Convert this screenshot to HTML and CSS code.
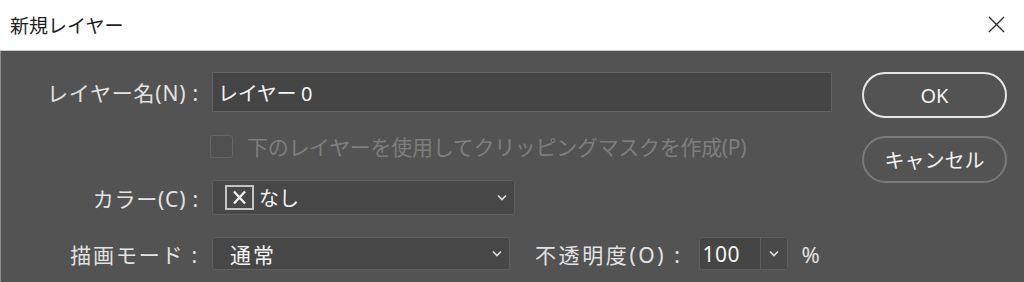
FILE: index.html
```html
<!DOCTYPE html>
<html lang="ja">
<head>
    <meta charset="UTF-8">
    <title>新規レイヤー</title>
    <link rel="stylesheet" href="styles.css">
</head>
<body>
  <div class="titlebar">
    <span class="title">新規レイヤー</span>
    <svg class="close" width="17" height="17" viewBox="0 0 17 17">
      <path d="M1 1 L16 16 M16 1 L1 16" stroke="#2b2b2b" stroke-width="1.4" fill="none"/>
    </svg>
  </div>

  <div class="dialog">
    <div class="form">
      <span class="label">レイヤー名(N) :</span>
      <div class="textbox">レイヤー 0</div>

      <span></span>
      <div class="checkRow">
        <span class="checkbox"></span>
        <span class="checkText">下のレイヤーを使用してクリッピングマスクを作成(P)</span>
      </div>

      <span class="label colorLabel">カラー(C) :</span>
      <div class="select colorSelect">
        <svg class="noneIcon" width="29" height="25" viewBox="0 0 29 25">
          <rect x="1" y="1" width="27" height="23" stroke="#c4c4c4" stroke-width="2" fill="none"/>
          <path d="M9 6.5 L20 18.5 M20 6.5 L9 18.5" stroke="#efefef" stroke-width="2.4" fill="none"/>
        </svg>
        <span class="selectText">なし</span>
        <svg class="chev" width="10" height="7" viewBox="0 0 10 7">
          <path d="M1 1.5 L5 5.5 L9 1.5" stroke="#dcdcdc" stroke-width="1.7" fill="none"/>
        </svg>
      </div>

      <span class="label modeLabel">描画モード :</span>
      <div class="modeRow">
        <div class="select modeSelect">
          <span class="selectText modeText">通常</span>
          <svg class="chev" width="10" height="7" viewBox="0 0 10 7">
            <path d="M1 1.5 L5 5.5 L9 1.5" stroke="#dcdcdc" stroke-width="1.7" fill="none"/>
          </svg>
        </div>
        <span class="label opacityLabel">不透明度(O) :</span>
        <div class="opacity">
          <span class="opacityValue">100</span>
          <span class="opacityDrop">
            <svg width="10" height="7" viewBox="0 0 10 7">
              <path d="M1 1.5 L5 5.5 L9 1.5" stroke="#dcdcdc" stroke-width="1.7" fill="none"/>
            </svg>
          </span>
        </div>
        <span class="percent">%</span>
      </div>
    </div>

    <div class="buttons">
      <div class="btn btnOk">OK</div>
      <div class="btn btnCancel">キャンセル</div>
    </div>
  </div>
</body>
</html>
```

FILE: styles.css
```css
body {
  margin: 0;
  font-family: "Noto Sans", "Noto Sans CJK JP", sans-serif;
  background-color: #535353;
  overflow: hidden;
}

/* タイトルバー */
.titlebar {
  height: 51px;
  background-color: #fff;
  border-bottom: 1px solid #c9c9c9;
  display: flex;
  align-items: center;
  justify-content: space-between;
  padding: 0 19px 0 10px;
  box-sizing: border-box;
}

.title {
  font-family: "Noto Sans CJK JP", sans-serif;
  font-size: 19px;
  color: #1e1e1e;
  margin-top: -2px;
}

.close {
  margin-top: -2px;
}

/* ダイアログ本体 */
.dialog {
  display: flex;
  height: 231px;
  border-left: 1px solid #8c8c8c;
  background-color: #535353;
  padding-top: 21px;
  box-sizing: border-box;
}

.form {
  display: grid;
  grid-template-columns: 199px 620px;
  grid-template-rows: 40px 24px 35px 33px;
  column-gap: 12px;
  row-gap: 22px;
}

.label {
  color: #e2e2e2;
  font-size: 21px;
  letter-spacing: 0.8px;
  text-align: right;
  align-self: center;
  padding-right: 1px;
  white-space: nowrap;
}

.modeLabel {
  letter-spacing: 1.8px;
}

.textbox {
  background-color: #454545;
  border: 1px solid #636363;
  color: #f4f4f4;
  font-size: 20px;
  letter-spacing: -0.3px;
  display: flex;
  align-items: center;
  padding-left: 5px;
}

.checkRow {
  display: flex;
  align-items: center;
  margin-left: -2px;
}

.checkbox {
  width: 21px;
  height: 21px;
  border: 1px solid #666;
  border-radius: 3px;
  background-color: #505050;
}

.checkText {
  margin-left: 14px;
  color: #7e7e7e;
  font-size: 21px;
  letter-spacing: -0.3px;
}

.select {
  display: flex;
  align-items: center;
  background-color: #474747;
  border: 1px solid #5f5f5f;
  border-radius: 3px;
  color: #f2f2f2;
  font-size: 20px;
  box-sizing: border-box;
}

.colorSelect {
  width: 303px;
  padding: 0 7px 0 12px;
}

.noneIcon {
  margin-right: 5px;
}

.selectText {
  flex: 1;
}

.modeText {
  font-size: 21px;
  letter-spacing: 2px;
}

.modeRow {
  display: flex;
  align-items: stretch;
}

.modeSelect {
  width: 298px;
  padding: 0 7px 0 17px;
}

.opacityLabel {
  margin-left: 25px;
  letter-spacing: 2.6px;
}

.opacity {
  display: flex;
  margin-left: 15px;
  width: 89px;
  border: 1px solid #5f5f5f;
  border-radius: 3px;
  background-color: #454545;
  box-sizing: border-box;
}

.opacityValue {
  width: 61px;
  color: #f4f4f4;
  font-size: 21px;
  letter-spacing: 0.5px;
  display: flex;
  align-items: center;
  padding-left: 3px;
  box-sizing: border-box;
  border-right: 1px solid #5c5c5c;
}

.opacityDrop {
  flex: 1;
  display: flex;
  align-items: center;
  justify-content: center;
  background-color: #494949;
}

.percent {
  margin-left: 14px;
  color: #e2e2e2;
  font-size: 22px;
  align-self: center;
}

/* ボタン */
.buttons {
  margin-left: 30px;
  display: flex;
  flex-direction: column;
  gap: 18px;
}

.btn {
  width: 145px;
  border-radius: 24px;
  display: flex;
  align-items: center;
  justify-content: center;
  color: #f2f2f2;
  font-size: 20px;
  box-sizing: border-box;
}

.btnOk {
  height: 46px;
  border: 2px solid #e6e6e6;
}

.btnCancel {
  height: 47px;
  border: 2px solid #7a7a7a;
}
```
